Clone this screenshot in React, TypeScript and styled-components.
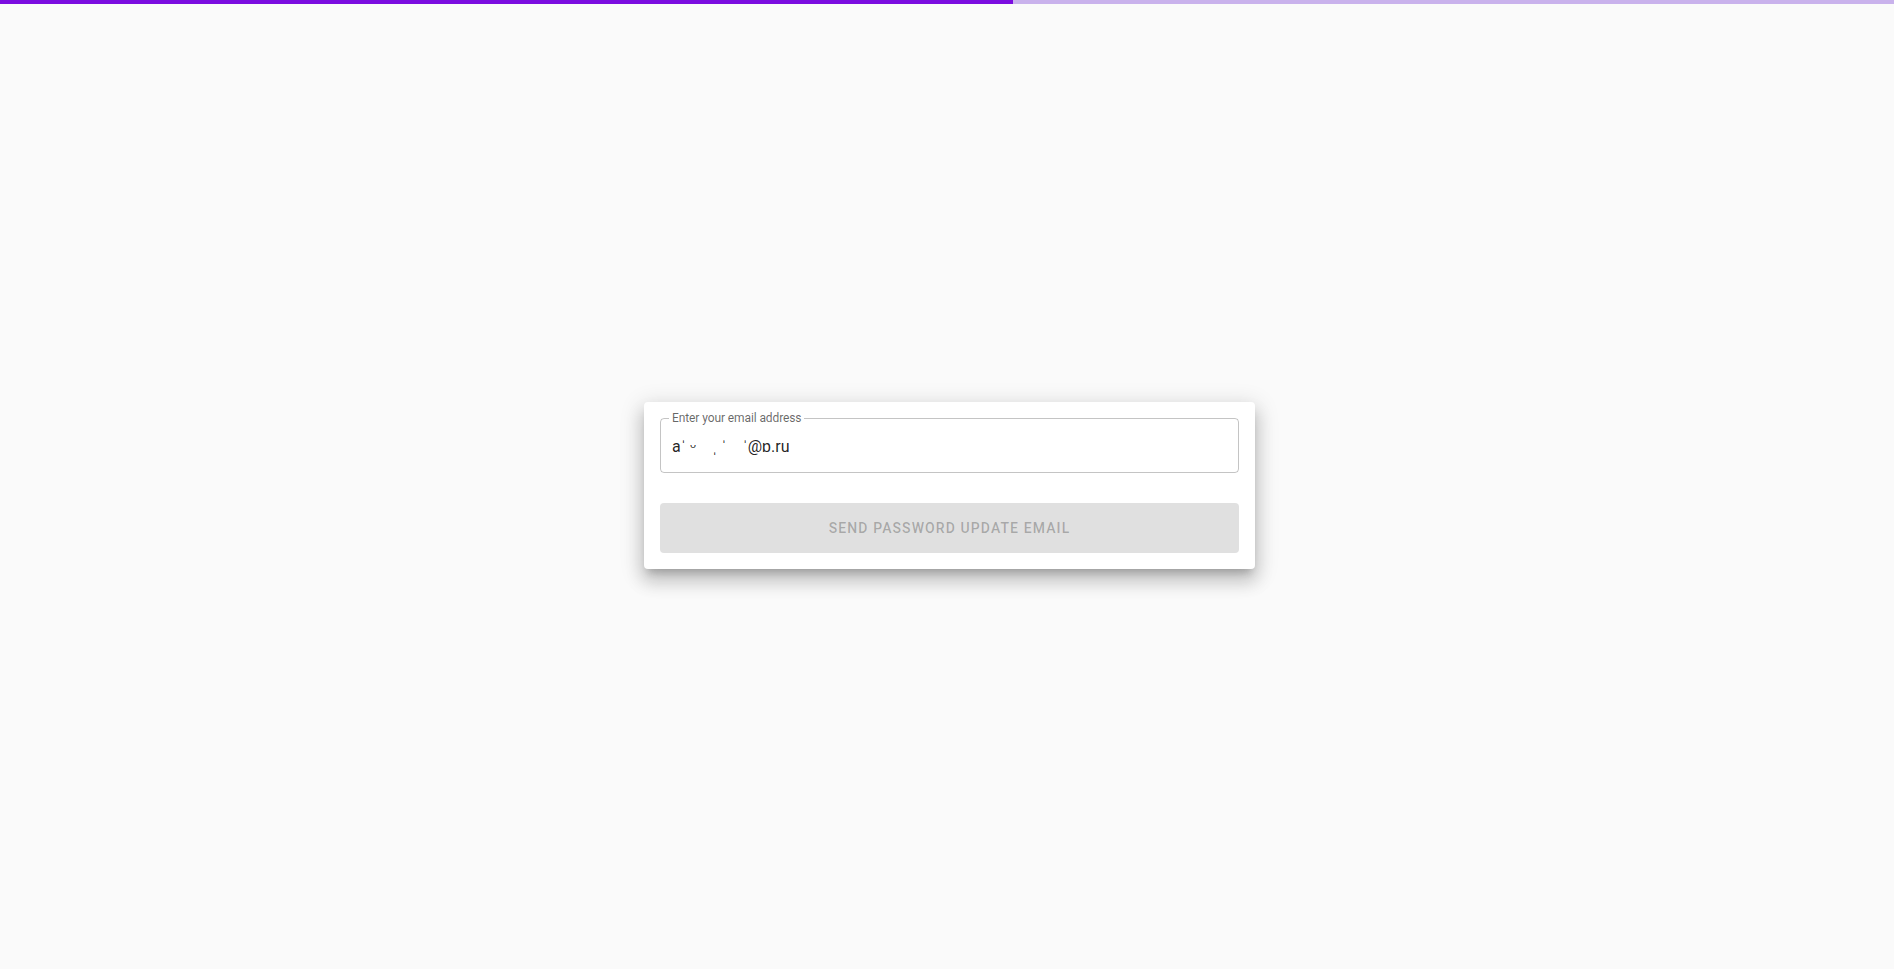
import React from "react";
import styled, { createGlobalStyle } from "styled-components";

const GlobalStyle = createGlobalStyle`
  html, body { margin: 0; padding: 0; }
  body { background: #fafafa; font-family: Roboto, "Liberation Sans", Arial, sans-serif; }
`;

const Page = styled.div`
  position: relative;
  height: 969px;
  display: flex;
  align-items: center;
  justify-content: center;
  padding: 2px 0 0 5px;
  box-sizing: border-box;
  overflow: hidden;
`;

const ProgressTrack = styled.div`
  position: absolute;
  top: 0;
  left: 0;
  right: 0;
  height: 4px;
  background: #c9b2ec;
  overflow: hidden;
`;

const ProgressBar = styled.div<{ $value: number }>`
  height: 100%;
  width: ${(p) => p.$value}%;
  background: #7b0ce0;
`;

const Card = styled.form`
  width: 611px;
  box-sizing: border-box;
  background: #fff;
  border-radius: 4px;
  padding: 16px;
  display: flex;
  flex-direction: column;
  gap: 30px;
  box-shadow: 0px 7px 8px -4px rgba(0, 0, 0, 0.2), 0px 12px 17px 2px rgba(0, 0, 0, 0.14),
    0px 5px 22px 4px rgba(0, 0, 0, 0.12);
`;

const Field = styled.div`
  position: relative;
  height: 55px;
  box-sizing: border-box;
  padding: 0 11px;
  border: 1px solid rgba(0, 0, 0, 0.23);
  border-radius: 4px;
  display: flex;
  align-items: center;
`;

const Label = styled.span`
  position: absolute;
  top: -8px;
  left: 8px;
  padding: 0 3px;
  background: #fff;
  font-size: 12px;
  line-height: 14px;
  color: rgba(0, 0, 0, 0.6);
  letter-spacing: -0.1px;
  white-space: nowrap;
`;

const Input = styled.input`
  border: none;
  outline: none;
  background: transparent;
  width: 100%;
  padding: 0;
  margin: 2px 0 0;
  font-family: Roboto, "Liberation Sans", Arial, sans-serif;
  font-size: 16px;
  line-height: 20px;
  color: rgba(0, 0, 0, 0.87);
`;

const Button = styled.button`
  height: 50px;
  border: none;
  border-radius: 4px;
  background: #e0e0e0;
  color: rgba(0, 0, 0, 0.26);
  font-family: Roboto, "Liberation Sans", Arial, sans-serif;
  font-size: 14px;
  font-weight: 500;
  letter-spacing: 1.1px;
  text-transform: uppercase;
  cursor: default;
`;

export default function App() {
  return (
    <>
      <GlobalStyle />
      <Page>
        <ProgressTrack>
          <ProgressBar $value={53.5} />
        </ProgressTrack>
        <Card onSubmit={(e) => e.preventDefault()}>
          <Field>
            <Label>Enter your email address</Label>
            <Input readOnly value={"aˈ ᵕ    ˌ ˈ    ˈ@ɒ.ru"} />
          </Field>
          <Button type="button" disabled>
            Send password update email
          </Button>
        </Card>
      </Page>
    </>
  );
}
